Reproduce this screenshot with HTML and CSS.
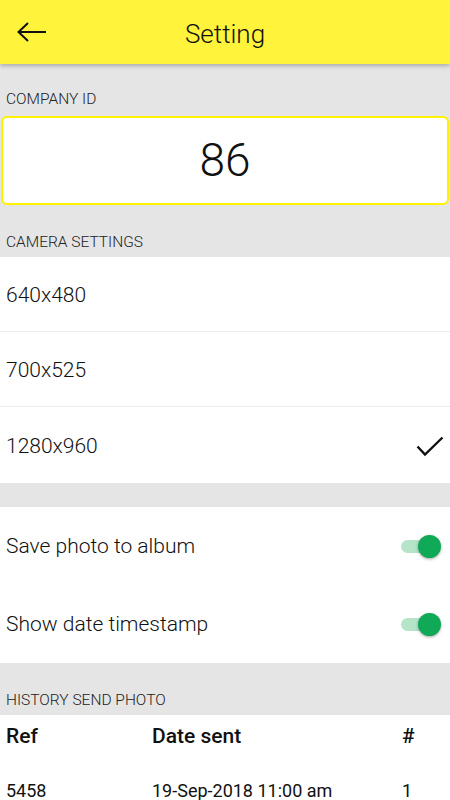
FILE: index.html
```html
<!DOCTYPE html>
<html>
<head>
<meta charset="utf-8">
<link rel="stylesheet" href="styles.css">
</head>
<body>
<header class="appbar">
  <svg class="back" width="30" height="20" viewBox="0 0 30 20"><path d="M1.5 10H29M11 1L1.5 10L11 19" fill="none" stroke="#111" stroke-width="2"/></svg>
  <h1 class="title">Setting</h1>
</header>
<main>
  <div class="section-label">COMPANY ID</div>
  <div class="idbox">86</div>
  <div class="section-label">CAMERA SETTINGS</div>
  <ul class="list">
    <li class="row">640x480</li>
    <li class="row">700x525</li>
    <li class="row">1280x960
      <svg class="check" width="28" height="22" viewBox="0 0 28 22"><path d="M1.5 10.5L9 18.5L26.5 1.5" fill="none" stroke="#111" stroke-width="2.4"/></svg>
    </li>
  </ul>
  <div class="gap"></div>
  <ul class="list toggles">
    <li class="trow">Save photo to album <span class="switch"><span class="knob"></span></span></li>
    <li class="trow">Show date timestamp <span class="switch"><span class="knob"></span></span></li>
  </ul>
  <div class="section-label history">HISTORY SEND PHOTO</div>
  <div class="table">
    <div class="thead"><span class="c1">Ref</span><span class="c2">Date sent</span><span class="c3">#</span></div>
    <div class="trow2"><span class="c1">5458</span><span class="c2">19-Sep-2018 11:00 am</span><span class="c3">1</span></div>
  </div>
</main>
</body>
</html>
```
FILE: styles.css
```css
* { box-sizing: border-box; }
html, body { margin: 0; padding: 0; }
body {
  width: 450px;
  height: 800px;
  overflow: hidden;
  background: #e5e5e5;
  font-family: Roboto, "Noto Sans", sans-serif;
  font-weight: 300;
  color: #111;
}
.appbar {
  height: 64px;
  background: #fff33b;
  display: flex;
  align-items: center;
  position: relative;
  z-index: 2;
  box-shadow: 0 2px 4px rgba(0,0,0,0.25);
}
.back {
  position: absolute;
  left: 17px;
  top: 22px;
}
.title {
  margin: 0;
  width: 100%;
  text-align: center;
  font-size: 26px;
  font-weight: 300;
  padding-top: 3px;
}
.section-label {
  font-size: 15.5px;
  padding: 26px 6px 0 6px;
  height: 52px;
  line-height: 18px;
  color: #222;
}
.idbox {
  margin: 0 1px;
  height: 89px;
  background: #fff;
  border: 2px solid #fff200;
  border-radius: 6px;
  display: flex;
  align-items: center;
  justify-content: center;
  font-size: 46px;
  font-weight: 300;
  padding-bottom: 2px;
}
.idbox + .section-label { padding-top: 28px; }
.list {
  list-style: none;
  margin: 0;
  padding: 0;
  background: #fff;
}
.row {
  height: 75px;
  display: flex;
  align-items: center;
  justify-content: space-between;
  padding: 2px 6px 0 6px;
  font-size: 21px;
  border-bottom: 1px solid #ececec;
}
.row:last-child { border-bottom: none; height: 76px; }
.check { margin-top: 2px; }
.gap { height: 24px; }
.trow {
  height: 78px;
  display: flex;
  align-items: center;
  justify-content: space-between;
  padding: 0 10px 0 6px;
  font-size: 21px;
}
.switch {
  position: relative;
  width: 36px;
  height: 13px;
  border-radius: 7px;
  background: #b5e4c9;
  margin-right: 3px;
}
.knob {
  position: absolute;
  right: -4px;
  top: -5px;
  width: 23px;
  height: 23px;
  border-radius: 50%;
  background: #10a957;
  box-shadow: 0 1px 3px rgba(0,0,0,0.35);
}
.history { padding-top: 28px; height: 52px; }
.table { background: #fff; }
.thead, .trow2 {
  display: flex;
  align-items: center;
  padding: 0 6px;
  font-size: 21px;
}
.thead { height: 42px; font-weight: 500; }
.trow2 { height: 43px; padding-top: 24px; font-weight: 400; font-size: 18px; line-height: 20px; }
.c1 { width: 146px; }
.c2 { width: 250px; }
.c3 { flex: 1; }
```
